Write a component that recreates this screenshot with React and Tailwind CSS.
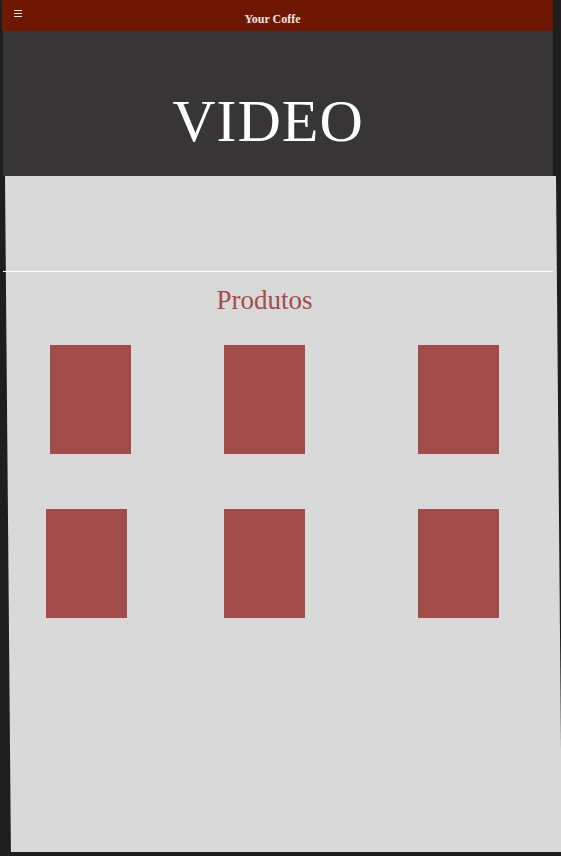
import React from "react";

const serif = { fontFamily: '"Liberation Serif", "DejaVu Serif", serif' };

function Box({ className = "" }) {
  return <div className={`w-[81px] h-[109px] bg-[#a34c4c] ${className}`} />;
}

export default function App() {
  return (
    <div className="w-[561px] h-[856px] bg-[#1e1e1e] overflow-hidden" style={serif}>
      <header className="ml-[2px] w-[551px] h-[31px] bg-[#6e1804] flex items-center relative">
        <div className="absolute left-[12px] top-[10px] flex flex-col gap-[2px]">
          <span className="block w-[8px] h-px bg-[#f3e6e0]" />
          <span className="block w-[8px] h-px bg-[#f3e6e0]" />
          <span className="block w-[8px] h-px bg-[#f3e6e0]" />
        </div>
        <h1 className="w-full text-center text-[12px] font-bold text-[#f1e4dc] pt-[6px] pr-[10px]">Your Coffe</h1>
      </header>

      <section className="ml-[3px] w-[550px] h-[145px] bg-[#373536] flex items-center justify-center">
        <span className="text-[60px] leading-none text-white tracking-[1px] pt-[34px] pr-[20px]">VIDEO</span>
      </section>

      <main className="ml-[5px] w-[551px] h-[676px] bg-[#d9d9d9] skew-x-[0.5deg] origin-top">
        <div className="-skew-x-[0.5deg] origin-top h-full">
          <div className="h-[95px]" />
          <div className="-ml-[2px] w-[550px] h-px bg-white" />
          <h2 className="text-center text-[27px] leading-none text-[#a34c4c] mt-[15px] pr-[32px]">Produtos</h2>
          <div className="flex mt-[31px]">
            <Box className="ml-[45px]" />
            <Box className="ml-[93px]" />
            <Box className="ml-[113px]" />
          </div>
          <div className="flex mt-[55px]">
            <Box className="ml-[41px]" />
            <Box className="ml-[97px]" />
            <Box className="ml-[113px]" />
          </div>
        </div>
      </main>
    </div>
  );
}
